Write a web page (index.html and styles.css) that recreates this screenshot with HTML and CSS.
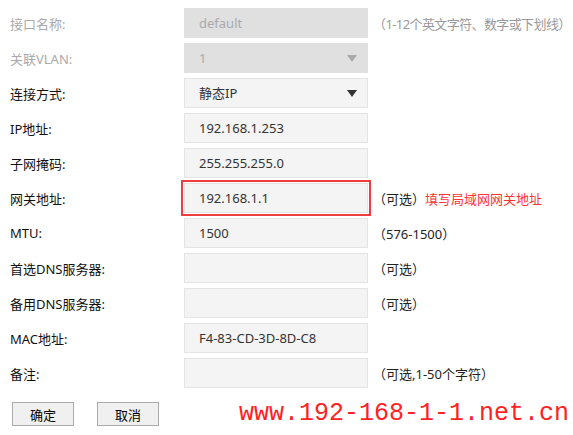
FILE: index.html
```html
<!DOCTYPE html>
<html lang="zh-CN">
<head>
    <meta charset="UTF-8">
    <title>WAN设置</title>
    <link rel="stylesheet" href="styles.css">
</head>
<body>

<div class="form">

    <div class="row disabled">
        <label>接口名称:</label>
        <div class="field">default</div>
        <span class="hint grey">（1-12个英文字符、数字或下划线）</span>
    </div>

    <div class="row disabled">
        <label>关联VLAN:</label>
        <div class="field select">1<i class="arrow"></i></div>
    </div>

    <div class="row">
        <label>连接方式:</label>
        <div class="field select">静态IP<i class="arrow"></i></div>
    </div>

    <div class="row">
        <label>IP地址:</label>
        <div class="field">192.168.1.253</div>
    </div>

    <div class="row">
        <label>子网掩码:</label>
        <div class="field">255.255.255.0</div>
    </div>

    <div class="row">
        <label>网关地址:</label>
        <div class="field marked">192.168.1.1</div>
        <span class="hint">（可选）<span class="note">填写局域网网关地址</span></span>
    </div>

    <div class="row">
        <label>MTU:</label>
        <div class="field">1500</div>
        <span class="hint">（576-1500）</span>
    </div>

    <div class="row">
        <label>首选DNS服务器:</label>
        <div class="field"></div>
        <span class="hint">（可选）</span>
    </div>

    <div class="row">
        <label>备用DNS服务器:</label>
        <div class="field"></div>
        <span class="hint">（可选）</span>
    </div>

    <div class="row">
        <label>MAC地址:</label>
        <div class="field">F4-83-CD-3D-8D-C8</div>
    </div>

    <div class="row">
        <label>备注:</label>
        <div class="field"></div>
        <span class="hint">（可选,1-50个字符）</span>
    </div>

    <div class="actions">
        <button class="btn">确定</button>
        <button class="btn">取消</button>
        <span class="watermark">www.192-168-1-1.net.cn</span>
    </div>

</div>

</body>
</html>
```

FILE: styles.css
```css
body { margin: 0; background: #fff; font-family: "Noto Sans", "Noto Sans CJK SC", sans-serif; font-size: 13px; color: #111; }
.form { padding: 8px 0 0 10px; }
.row { display: flex; align-items: center; height: 30px; margin-bottom: 5px; }
.row label { width: 174px; flex: none; }
.field { position: relative; width: 184px; height: 30px; box-sizing: border-box; flex: none; padding-left: 14px; line-height: 28px; background: #f4f4f4; border: 1px solid #e4e4e4; color: #333; }
.disabled label { color: #aaa; }
.disabled .field { background: #e0e0e0; border-color: #e0e0e0; color: #aaa; }
.marked { outline: 2px solid #f03c3c; outline-offset: 1px; }
.arrow { position: absolute; right: 10px; top: 11px; width: 0; height: 0; border-left: 5px solid transparent; border-right: 5px solid transparent; border-top: 7px solid #333; }
.disabled .arrow { border-top-color: #aaa; }
.hint { margin-left: 5px; color: #222; white-space: nowrap; }
.hint.grey { color: #999; letter-spacing: -0.6px; }
.note { color: #f33; }
.actions { display: flex; align-items: flex-end; margin-top: 13px; padding-left: 2px; }
.btn { width: 62px; height: 24px; margin-right: 23px; padding: 0; font-family: "Noto Sans CJK SC", sans-serif; font-size: 13px; color: #000; background: #f0f0f0; border: 1px solid #aaa; }
.watermark { margin-left: auto; margin-right: 4px; font-family: "Liberation Mono", monospace; font-size: 25px; line-height: 25px; color: #f22; }
```
